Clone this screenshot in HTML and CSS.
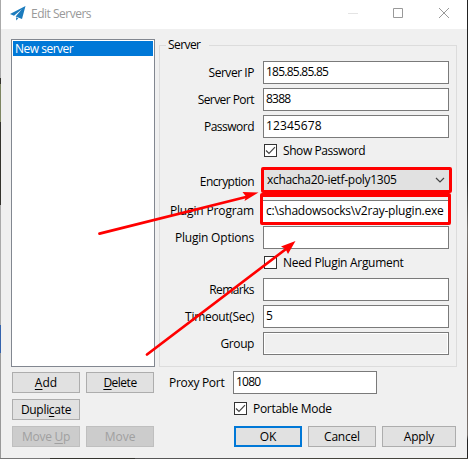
FILE: index.html
```html
<!DOCTYPE html>
<html lang="en">
<head>
<meta charset="utf-8">
<title>Edit Servers</title>
<link rel="stylesheet" href="styles.css">
</head>
<body>
<div class="desktop">
<main class="window">
  <header class="titlebar">
    <svg class="plane" width="16" height="15" viewBox="0 0 16 15"><path fill="#1b7bbd" d="M15.5 0 0 8.1 4 9.700 12 3 5.600 10.500 12 13Z"/><path fill="#1b7bbd" d="M6 11.300 8.300 12.200 6.200 14.600Z"/></svg>
    <h1><span class="t t-title">Edit Servers</span></h1>
    <svg class="controls" width="102" height="12" viewBox="0 0 102 12" fill="none"><path stroke="#e4e4e4" d="M0 6.500h10"/><path stroke="#999" d="M45.500 1.500h9v9h-9zM91 1l10 10M101 1 91 11"/></svg>
  </header>
  <div class="body">
    <section class="left">
      <div class="list"><div class="item"><span class="t t-item">New server</span></div></div>
      <div class="actions">
        <div class="btn"><span class="t t-add"><u>A</u>dd</span></div>
        <div class="btn"><span class="t t-delete"><u>D</u>elete</span></div>
        <div class="btn"><span class="t t-dup">Dupli<u>c</u>ate</span></div>
        <div></div>
        <div class="btn off"><span class="t t-up">Move <u>U</u>p</span></div>
        <div class="btn off"><span class="t t-move">Move</span></div>
      </div>
    </section>
    <section class="right">
      <div class="group">
        <div class="legend"><span class="t t-server">Server</span></div>
        <div class="row"><label><span class="t t-ip">Server IP</span></label><div class="field"><span class="t v-ip">185.85.85.85</span></div></div>
        <div class="row"><label><span class="t t-port">Server Port</span></label><div class="field"><span class="t v-port">8388</span></div></div>
        <div class="row"><label><span class="t t-pass">Password</span></label><div class="field"><span class="t v-pass">12345678</span></div></div>
        <div class="row check"><i class="box"><svg width="11" height="11" viewBox="0 0 11 11"><path d="M1 5.5 4 8.5 10 2.2"/></svg></i><span class="t t-show">Show Password</span></div>
        <div class="row enc"><label><span class="t t-enc">Encryption</span></label><div class="select"><span class="t v-enc">xchacha20-ietf-poly1305</span><svg width="10" height="6" viewBox="0 0 10 6"><path d="M1 1 5 5 9 1"/></svg></div></div>
        <div class="row plug"><label><span class="t t-prog">Plugin Program</span></label><div class="marked"><span class="t v-prog">c:\shadowsocks\v2ray-plugin.exe</span></div></div>
        <div class="row"><label><span class="t t-opt">Plugin Options</span></label><div class="field"></div></div>
        <div class="row check need"><i class="box"></i><span class="t t-need">Need Plugin Argument</span></div>
        <div class="row"><label><span class="t t-rem">Remarks</span></label><div class="field"></div></div>
        <div class="row"><label><span class="t t-time">Timeout(Sec)</span></label><div class="field"><span class="t">5</span></div></div>
        <div class="row"><label><span class="t t-group">Group</span></label><div class="field disabled"></div></div>
      </div>
      <div class="proxy"><label><span class="t t-proxy">Proxy Port</span></label><div class="field"><span class="t v-proxy">1080</span></div></div>
      <div class="check portable"><i class="box"><svg width="11" height="11" viewBox="0 0 11 11"><path d="M1 5.5 4 8.5 10 2.2"/></svg></i><span class="t t-portable">Portable Mode</span></div>
      <div class="confirm">
        <div class="btn primary"><span class="t t-ok">OK</span></div>
        <div class="btn"><span class="t t-cancel">Cancel</span></div>
        <div class="btn"><span class="t t-apply">Apply</span></div>
      </div>
    </section>
  </div>
</main>
<svg class="arrows" width="468" height="459" viewBox="0 0 468 459"><g stroke="red" stroke-width="2.8" stroke-linecap="round"><path d="M99.5 233.6 246 197M147 354.5 286 249"/></g><path fill="red" d="M258.500 192.500 242.500 192 246 196.500 244.500 201ZM295.500 241 281 246.500 285.500 249 288 254Z"/></svg>
</div>
</body>
</html>
```
FILE: styles.css
```css
* { box-sizing: border-box; }
body { margin: 0; font: 12px/16px "Open Sans", "Noto Sans", sans-serif; color: #000; }
.desktop {
  position: relative; width: 468px; height: 459px; padding: 0 1px 1px; overflow: hidden;
  background:
    linear-gradient(90deg, #777 50px, #33332e 50px 135px, #555 135px 300px, #44433c 300px) 0 100% / 468px 1px no-repeat,
    linear-gradient(#aaa 0 78px, #34332d 78px 84px, #7d8561 84px 122px, #34332d 122px 205px, #aaa 205px 325px, #3463ad 325px 353px, #999 353px) 0 0 / 1px 459px no-repeat,
    linear-gradient(#222 0 180px, #77736f 230px, #5c4a42 310px, #77706c 435px, #222 440px) 100% 0 / 1px 459px no-repeat;
}
.window { width: 466px; height: 458px; background: #f0f0f0; }
.titlebar { display: flex; align-items: flex-start; height: 29px; padding: 6px 17px 0 9px; background: #fff; }
.plane { flex: none; }
h1 { flex: 1; margin: 0 0 0 5px; font: inherit; color: #999; }
.controls { margin-top: 1px; }
.body { display: flex; gap: 4px; padding: 10px 10px 0; }
.left { width: 144px; }
.list { height: 328px; padding: 1px; border: 1px solid #828790; background: #fff; }
.item { height: 15px; padding-left: 2px; line-height: 16px; background: #0078d7; color: #fff; }
.actions { display: grid; grid-template-columns: 68px 68px; grid-auto-rows: 21px; gap: 6px; padding: 5px 1px 0; }
.btn { border: 1px solid #adadad; background: #e1e1e1; line-height: 19px; text-align: center; }
.off { border-color: #bfbfbf; background: #ccc; color: #a0a0a0; }
.primary { border: 2px solid #0078d7; line-height: 17px; }
u { text-decoration-thickness: 1px; text-underline-offset: 2px; }
.right { width: 298px; }
.group { height: 322px; margin-top: 6px; padding: 15px 7px 0 0; border: 1px solid #dcdcdc; }
.legend { width: 43px; height: 16px; margin: -24px 0 8px 6px; padding-left: 2px; background: #f0f0f0; }
.row { display: flex; height: 27px; }
.row label { flex: none; width: 94px; margin-right: 9px; padding-top: 4px; text-align: right; }
.field { width: 186px; height: 23px; padding-left: 2px; border: 1px solid #7a7a7a; background: #fff; line-height: 20px; }
.row .field { flex: none; }
.check { display: flex; align-items: flex-start; }
.row.check { height: 25px; padding: 2px 0 0 104px; }
.row.need { padding-top: 3px; }
.box { display: grid; place-items: center; width: 13px; height: 13px; margin-right: 6px; border: 1px solid #333; background: #fff; }
.box svg, .select svg { fill: none; stroke: #444; stroke-width: 1.2; }
.check .t { margin-top: -1px; }
.enc label { padding-top: 7px; }
.select { display: flex; align-items: center; justify-content: space-between; flex: none; width: 191px; height: 26px; margin: 0 0 0 -2px; padding: 0 4px 1px 3px; border: 3px solid red; border-radius: 2px; background: #e1e1e1; }
.plug { height: 32px; }
.row.plug label { padding-top: 9px; }
.marked {
  flex: none; width: 191px; height: 32px; margin: -1px 0 0 -3px; padding: 3px 0 0 3px;
  border: 3px solid red; border-top-width: 4px; border-radius: 2px; line-height: 21px;
  background: linear-gradient(#f0f0f0 3px, #7a7a7a 3px 4px, #fff 4px) padding-box;
}
.disabled { background: #f0f0f0; box-shadow: inset 0 0 0 1px #fff; }
.proxy { display: flex; margin-top: 4px; }
.proxy label { flex: none; width: 66px; margin-right: 8px; padding: 4px 0 0 10px; }
.proxy .field { width: 144px; }
.portable { height: 13px; margin: 8px 0 11px 75px; }
.confirm { display: grid; grid-template-columns: 68px 68px 74px; gap: 6px; height: 21px; margin-left: 75px; }
.t { display: inline-block; white-space: nowrap; }
.arrows { position: absolute; inset: 0; }

/* Tracking that gives the labels the narrow widths of a system dialog */
.t-title { letter-spacing: -.5px; }
.t-item, .t-pass, .t-delete { letter-spacing: -.5px; }
.t-server, .t-enc, .t-rem, .t-port { letter-spacing: -.57px; }
.t-ip { letter-spacing: -.45px; }
.t-show, .t-group { letter-spacing: -.42px; }
.t-prog { letter-spacing: -.15px; }
.t-opt, .t-cancel, .t-apply { letter-spacing: -.2px; }
.t-need, .t-time, .t-proxy, .t-portable, .t-up, .t-dup, .v-enc { letter-spacing: -.3px; }
.v-ip, .v-port, .v-proxy { letter-spacing: -.75px; }
.v-pass { letter-spacing: .1px; }
.v-prog { letter-spacing: -.2px; }
```
